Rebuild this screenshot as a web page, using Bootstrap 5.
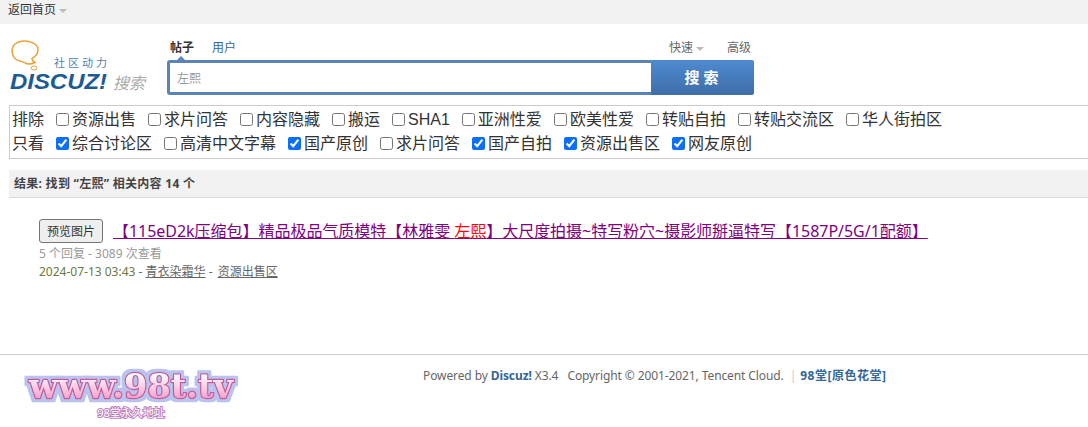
<!DOCTYPE html>
<html lang="zh-CN">
<head>
    <meta charset="UTF-8">
    <meta name="viewport" content="width=device-width, initial-scale=1.0">
    <title>左熙 - 搜索</title>
    <link href="https://cdn.jsdelivr.net/npm/bootstrap@5.3.3/dist/css/bootstrap.min.css" rel="stylesheet">
    <style>
        html, body { height: 427px; overflow: hidden; }
        body { font-family: "Noto Sans", "Noto Sans CJK SC", sans-serif; font-size: 12px; color: #444; background: #fff; }
        a { color: inherit; }
        .top-strip { height: 24px; background: #f2f2f2; padding-left: 8px; color: #333; line-height: 19px; }
        .caret-down { display: inline-block; width: 0; height: 0; border: 4px solid transparent; border-top: 4px solid #bbb; border-bottom: 0; margin-left: 3px; vertical-align: middle; }
        .head-row { height: 81px; }
        .logo-box { width: 157px; margin-left: 10px; padding-top: 16px; }
        .search-box { width: 587px; padding-top: 17px; }
        .search-tabs { height: 19px; line-height: 13px; color: #369; padding-left: 3px; }
        .search-tabs b { color: #333; }
        .search-tabs .tab-gap { margin-left: 18px; }
        .search-tabs .tab-more { color: #666; }
        .search-tabs .tab-last { margin-left: 23px; margin-right: 3px; }
        .search-frame { height: 35px; background: #5a84b8; border-radius: 3px; padding: 3px; position: relative; }
        .search-frame::before { content: ""; position: absolute; left: 10px; top: -4px; border: 4px solid transparent; border-top: 0; border-bottom-color: #5a84b8; }
        .search-field { width: 481px; background: #fff; color: #999; padding: 0 7px; line-height: 31px; }
        .search-btn { width: 103px; margin: -3px -3px -3px 0; border-radius: 0 3px 3px 0; background: linear-gradient(#4e8ad0, #3f6ea8); color: #fff; font-size: 15px; font-weight: bold; letter-spacing: 4px; text-align: center; line-height: 35px; padding-left: 2px; }
        .filter-box { width: 1100px; height: 54px; margin-left: 9px; border: 1px solid #ccc; padding: 2px 0 0 2px; font-family: "Liberation Sans", "Noto Sans CJK SC", sans-serif; font-size: 16px; color: #333; line-height: 24px; }
        .filter-row { height: 24px; white-space: nowrap; }
        .filter-name { width: 44px; display: inline-block; }
        .filter-item { margin-right: 12px; }
        .filter-item input { width: 13px; height: 13px; margin: 0 3px 0 0; vertical-align: -1px; accent-color: #0d6efd; }
        .result-bar { height: 28px; margin: 11px 0 0 9px; background: #f2f2f2; border-bottom: 1px solid #ddd; padding-left: 5px; line-height: 28px; font-weight: bold; color: #444; letter-spacing: .28px; }
        .result-item { padding: 21px 0 0 39px; height: 156px; }
        .preview-btn { width: 64px; height: 24px; padding: 0; background: #efefef; border: 1px solid #767676; border-radius: 3px; font-size: 12px; color: #333; line-height: 21px; }
        .result-title { font-size: 16px; color: #800080; margin-left: 10px; line-height: 24px; letter-spacing: -.03px; }
        .result-title em { color: #f00; font-style: normal; }
        .result-meta { height: 18px; line-height: 18px; color: #999; }
        .result-meta-first { margin-top: 2px; }
        .result-date { color: #6a7a3a; }
        .result-line { color: #666; }
        .forum-link { margin-left: 2px; }
        .foot-area { border-top: 1px solid #ccc; height: 73px; }
        .foot-logo { width: 423px; padding: 9px 0 0 24px; }
        .foot-text { padding-top: 12px; line-height: 18px; color: #666; white-space: nowrap; letter-spacing: -.1px; }
        .foot-text b { color: #369; }
        .foot-bar { color: #ccc; margin: 0 4px 0 6px; }
        .foot-site { letter-spacing: .5px; }
    </style>
</head>
<body>
    <div class="top-strip">返回首页<span class="caret-down"></span></div>

    <div class="head-row d-flex">
        <div class="logo-box">
            <svg width="140" height="54" viewBox="0 0 140 54">
                <path d="M14 1C7 1 2 5 2 11c0 5 3 9 8 10 3 .5 4 1 6 2.500 3 1 7 0 9-1-2-1-3-2-3-4 4-2 6-5 6-9C28 4 21 1 14 1z" fill="#fff" stroke="#e9a23c" stroke-width="1.500"/>
                <ellipse cx="24" cy="28" rx="3" ry="2" fill="#fff" stroke="#e9a23c"/>
                <text x="44" y="27" font-size="11" letter-spacing="3" fill="#4d83b3">社区动力</text>
                <text x="0" y="49" font-size="22" font-weight="bold" font-style="italic" fill="#1d5b96" textLength="97" lengthAdjust="spacingAndGlyphs" font-family="Liberation Sans">DISCUZ!</text>
                <text x="103" y="49" font-size="16" font-style="italic" fill="#aaa">搜索</text>
            </svg>
        </div>
        <div class="search-box">
            <div class="search-tabs d-flex">
                <b>帖子</b><span class="tab-gap">用户</span>
                <span class="tab-more ms-auto">快速<span class="caret-down"></span></span><span class="tab-last tab-more">高级</span>
            </div>
            <div class="search-frame d-flex">
                <div class="search-field">左熙</div>
                <div class="search-btn">搜索</div>
            </div>
        </div>
    </div>

    <div class="filter-box">
        <div class="filter-row">
            <span class="filter-name">排除</span><label class="filter-item"><input type="checkbox">资源出售</label><label class="filter-item"><input type="checkbox">求片问答</label><label class="filter-item"><input type="checkbox">内容隐藏</label><label class="filter-item"><input type="checkbox">搬运</label><label class="filter-item"><input type="checkbox">SHA1</label><label class="filter-item"><input type="checkbox">亚洲性爱</label><label class="filter-item"><input type="checkbox">欧美性爱</label><label class="filter-item"><input type="checkbox">转贴自拍</label><label class="filter-item"><input type="checkbox">转贴交流区</label><label class="filter-item"><input type="checkbox">华人街拍区</label>
        </div>
        <div class="filter-row">
            <span class="filter-name">只看</span><label class="filter-item"><input type="checkbox" checked>综合讨论区</label><label class="filter-item"><input type="checkbox">高清中文字幕</label><label class="filter-item"><input type="checkbox" checked>国产原创</label><label class="filter-item"><input type="checkbox">求片问答</label><label class="filter-item"><input type="checkbox" checked>国产自拍</label><label class="filter-item"><input type="checkbox" checked>资源出售区</label><label class="filter-item"><input type="checkbox" checked>网友原创</label>
        </div>
    </div>

    <div class="result-bar">结果: 找到 “左熙” 相关内容 14 个</div>

    <div class="result-item">
        <div class="d-flex align-items-center">
            <button type="button" class="preview-btn">预览图片</button>
            <a href="#" class="result-title">【115eD2k压缩包】精品极品气质模特【林雅雯 <em>左熙</em>】大尺度拍摄~特写粉穴~摄影师掰逼特写【1587P/5G/1配额】</a>
        </div>
        <div class="result-meta result-meta-first">5 个回复 - 3089 次查看</div>
        <div class="result-meta result-line"><span class="result-date">2024-07-13 03:43</span> - <a href="#">青衣染霜华</a> - <a href="#" class="forum-link">资源出售区</a></div>
    </div>

    <div class="foot-area d-flex">
        <div class="foot-logo">
            <svg width="216" height="58" viewBox="0 0 216 58">
                <defs>
                    <linearGradient id="logoFill" x1="0" y1="0" x2="0" y2="1">
                        <stop offset="0.2" stop-color="#fff"/>
                        <stop offset="0.8" stop-color="#f7a3cd"/>
                    </linearGradient>
                    <filter id="logoHalo" x="-5%" y="-20%" width="110%" height="140%">
                        <feMorphology in="SourceAlpha" operator="dilate" radius="2.500" result="haloShape"/>
                        <feFlood flood-color="#b9c3ee"/>
                        <feComposite in2="haloShape" operator="in" result="halo"/>
                        <feMerge>
                            <feMergeNode in="halo"/>
                            <feMergeNode in="SourceGraphic"/>
                        </feMerge>
                    </filter>
                </defs>
                <text x="107" y="34" text-anchor="middle" font-family="DejaVu Serif" font-size="34" font-weight="bold" textLength="204" lengthAdjust="spacingAndGlyphs" fill="url(#logoFill)" stroke="#c05a9c" stroke-width="2.500" paint-order="stroke" stroke-linejoin="round" filter="url(#logoHalo)">www.98t.tv</text>
                <text x="107" y="53" text-anchor="middle" font-size="11" fill="#fff" stroke="#c080c0" stroke-width="2" paint-order="stroke">98堂永久地址</text>
            </svg>
        </div>
        <div class="foot-text">Powered by <b>Discuz!</b> X3.4 &nbsp; Copyright © 2001-2021, Tencent Cloud.<span class="foot-bar">|</span><b class="foot-site">98堂[原色花堂]</b></div>
    </div>

    <script src="https://cdn.jsdelivr.net/npm/bootstrap@5.3.3/dist/js/bootstrap.bundle.min.js"></script>
</body>
</html>
